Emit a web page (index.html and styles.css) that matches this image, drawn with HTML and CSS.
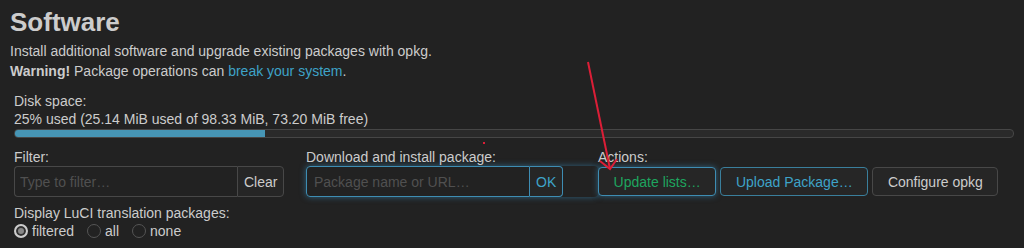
FILE: index.html
```html
<!DOCTYPE html>
<html lang="en">
<head>
  <meta charset="UTF-8">
  <title>Software</title>
  <link rel="stylesheet" href="styles.css">
</head>
<body>
  <h2>Software</h2>
  <p class="intro">Install additional software and upgrade existing packages with opkg.<br>
    <strong>Warning!</strong> Package operations can <a href="#">break your system</a>.</p>

  <div class="section">
    <div class="disk">
      <div class="label">Disk space:</div>
      <div class="usage">25% used (25.14 MiB used of 98.33 MiB, 73.20 MiB free)</div>
      <div class="bar"><div class="fill" style="width: 25%"></div></div>
    </div>

    <div class="controls">
      <div class="col">
        <div class="label">Filter:</div>
        <div class="group">
          <input type="text" class="field filter" placeholder="Type to filter…">
          <button type="button" class="btn addon">Clear</button>
        </div>
        <div class="label lang">Display LuCI translation packages:</div>
        <div class="radios">
          <label class="radio"><input type="radio" name="lang" checked> filtered</label>
          <label class="radio"><input type="radio" name="lang"> all</label>
          <label class="radio"><input type="radio" name="lang"> none</label>
        </div>
      </div>

      <div class="col">
        <div class="label">Download and install package:</div>
        <div class="group focused">
          <input type="text" class="field pkg" placeholder="Package name or URL…">
          <button type="button" class="btn addon ok">OK</button>
        </div>
      </div>

      <div class="col">
        <div class="label">Actions:</div>
        <div class="actions">
          <button type="button" class="btn update">Update lists…</button>
          <button type="button" class="btn upload">Upload Package…</button>
          <button type="button" class="btn">Configure opkg</button>
        </div>
      </div>
    </div>
  </div>

  <svg class="note" width="1024" height="248" viewBox="0 0 1024 248">
    <line x1="588" y1="62" x2="610" y2="169" />
    <polyline points="600,161 610,169 617,159" />
    <rect x="483" y="142" width="2" height="2" class="dot" />
  </svg>
</body>
</html>
```

FILE: styles.css
```css
body {
  margin: 0;
  padding: 7px 10px 0;
  background-color: #222222;
  color: #cccccc;
  font-family: "Liberation Sans", Arial, sans-serif;
  font-size: 14px;
  position: relative;
  height: 241px;
  overflow: hidden;
}

h2 {
  margin: 0;
  font-size: 26px;
  line-height: 30px;
  font-weight: bold;
  color: #cccccc;
}

.intro {
  margin: 4px 0 0;
  line-height: 20px;
}

.intro a {
  color: #3ea3c8;
  text-decoration: none;
}

.section {
  padding: 11px 0 0 4px;
}

.label {
  line-height: 18px;
}

.usage {
  line-height: 18px;
}

.bar {
  margin-top: 1px;
  height: 7px;
  border: 1px solid #464646;
  border-radius: 4px;
  background-color: #2a2a2a;
  overflow: hidden;
}

.fill {
  height: 100%;
  background-color: #4695b5;
}

.controls {
  display: grid;
  grid-template-columns: 292px 292px 1fr;
  margin-top: 10px;
}

.group {
  display: flex;
  height: 31px;
}

.field {
  box-sizing: border-box;
  height: 31px;
  margin: 0;
  padding: 0 5px;
  border: 1px solid #484848;
  border-right: none;
  border-radius: 4px 0 0 4px;
  background-color: #222222;
  color: #cccccc;
  font-family: inherit;
  font-size: 14px;
  outline: none;
}

.field::placeholder {
  color: #505050;
}

.filter {
  width: 223px;
}

.pkg {
  width: 224px;
  padding-left: 7px;
}

.btn {
  box-sizing: border-box;
  height: 29px;
  margin: 0;
  padding: 0 15px;
  border: 1px solid #484848;
  border-radius: 4px;
  background-color: #262626;
  color: #cccccc;
  font-family: inherit;
  font-size: 14px;
  cursor: pointer;
}

.addon {
  height: 31px;
  padding: 0 6px;
  border-radius: 0 4px 4px 0;
}

.focused {
  border-radius: 4px;
  box-shadow: 0 0 6px rgba(60, 150, 200, 0.55);
}

.focused .field,
.focused .addon {
  border-color: #3e8db3;
}

.focused .field {
  border-right: 1px solid #3e8db3;
}

.ok {
  color: #3ea3c8;
  border-left: none;
  padding: 0 6px;
}

.lang {
  margin-top: 7px;
}

.radios {
  display: flex;
  align-items: center;
  height: 18px;
}

.radio {
  display: flex;
  align-items: center;
  margin-right: 13px;
}

.radio input {
  appearance: none;
  box-sizing: border-box;
  width: 14px;
  height: 14px;
  margin: 0 4px 0 0;
  border: 1px solid #555555;
  border-radius: 50%;
  background-color: #222222;
}

.radio input:checked {
  border: 2px solid #cccccc;
  background-color: #888888;
  box-shadow: inset 0 0 0 2px #333333;
}

.actions {
  display: flex;
  gap: 4px;
  padding-top: 1px;
}

.actions .btn {
  padding: 0 14.6px;
}

.update {
  color: #1ea55f;
  border-color: #3e8db3;
  box-shadow: 0 0 6px rgba(60, 150, 200, 0.55);
}

.upload {
  color: #3ea3c8;
  border-color: #3a7f9c;
}

.note {
  position: absolute;
  top: 0;
  left: 0;
  pointer-events: none;
  fill: none;
  stroke: #dc1e37;
  stroke-width: 2;
}

.note .dot {
  fill: #dc1e37;
  stroke: none;
}
```
